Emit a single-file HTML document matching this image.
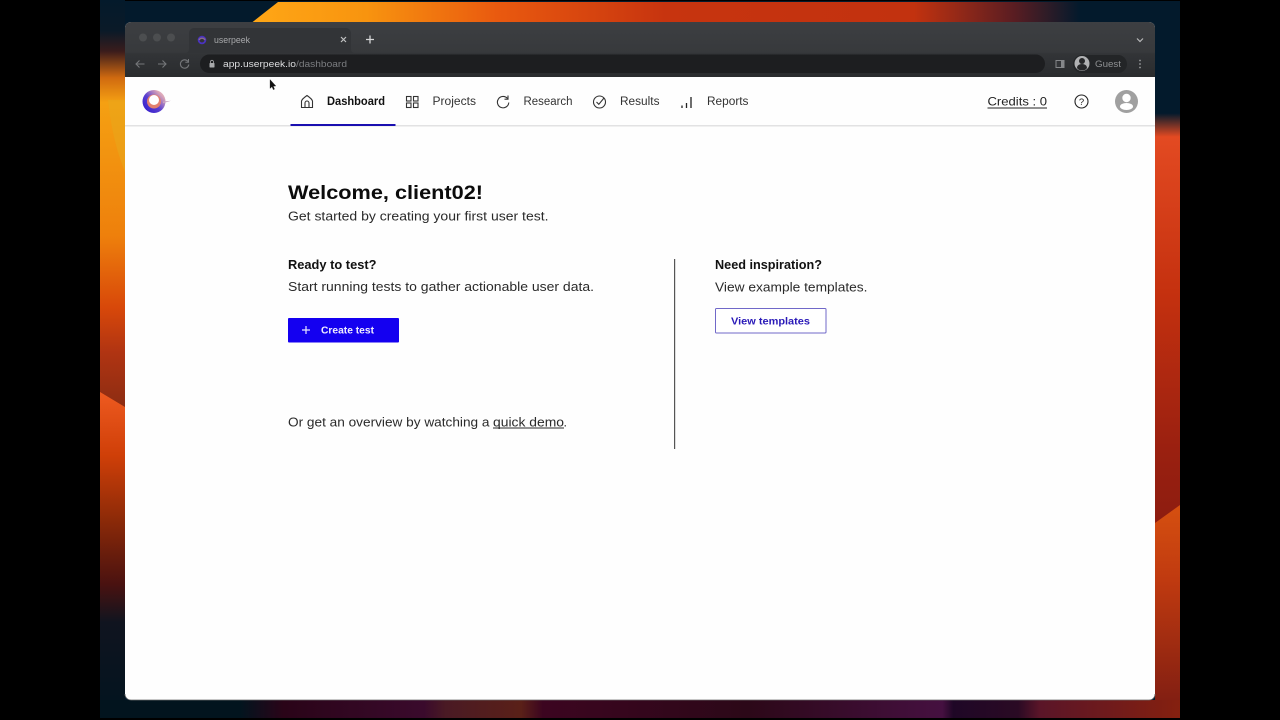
<!DOCTYPE html>
<html><head><meta charset="utf-8"><title>userpeek</title>
<style>html,body{margin:0;padding:0;background:#000;width:1280px;height:720px;overflow:hidden}svg{display:block}text{font-family:"Liberation Sans",sans-serif}</style></head>
<body>
<svg width="1280" height="720" viewBox="0 0 1280 720" xmlns="http://www.w3.org/2000/svg">
<defs>
<linearGradient id="top" x1="0" x2="1" y1="0" y2="0">
<stop offset="0" stop-color="#ffa716"/><stop offset=".14" stop-color="#f8940f"/><stop offset=".3" stop-color="#e9590f"/><stop offset=".5" stop-color="#c7340f"/><stop offset=".8" stop-color="#c2320f"/><stop offset=".92" stop-color="#5a1d22"/><stop offset="1" stop-color="#031a2c"/></linearGradient>
<linearGradient id="chrome" x1="0" x2="0" y1="0" y2="1"><stop offset="0" stop-color="#3d3f42"/><stop offset=".55" stop-color="#37393c"/><stop offset=".58" stop-color="#323437"/><stop offset="1" stop-color="#2a2c2e"/></linearGradient>
<linearGradient id="left" x1="0" x2="0" y1="0" y2="1">
<stop offset="0" stop-color="#041a2b"/><stop offset=".075" stop-color="#0a1a28"/><stop offset=".125" stop-color="#3a1c1c"/><stop offset=".19" stop-color="#d06a10"/><stop offset=".25" stop-color="#f5a012"/><stop offset=".575" stop-color="#ee800c"/><stop offset=".75" stop-color="#d8480a"/><stop offset=".86" stop-color="#b03412"/><stop offset="1" stop-color="#8a2c12"/></linearGradient>
<linearGradient id="left2" x1="0" x2="0" y1="0" y2="1">
<stop offset="0" stop-color="#ee5a20"/><stop offset=".2" stop-color="#cf3f08"/><stop offset=".4" stop-color="#8c2a08"/><stop offset=".6" stop-color="#4a1210"/><stop offset=".72" stop-color="#10141f"/><stop offset="1" stop-color="#02141f"/></linearGradient>
<linearGradient id="right" x1="0" x2="0" y1="0" y2="1">
<stop offset="0" stop-color="#031a2c"/><stop offset=".21" stop-color="#031a2c"/><stop offset=".255" stop-color="#e34a22"/><stop offset=".55" stop-color="#c5310f"/><stop offset=".85" stop-color="#9a2010"/><stop offset="1" stop-color="#8c1c10"/></linearGradient>
<linearGradient id="right2" x1="0" x2="0" y1="0" y2="1">
<stop offset="0" stop-color="#d65010"/><stop offset=".35" stop-color="#c03a10"/><stop offset="1" stop-color="#7a1b12"/></linearGradient>
<linearGradient id="bot" x1="0" x2="1" y1="0" y2="0">
<stop offset="0" stop-color="#02141e"/><stop offset=".13" stop-color="#02141e"/><stop offset=".17" stop-color="#2a0418"/><stop offset=".3" stop-color="#3a0a2c"/><stop offset=".32" stop-color="#4a1a24"/><stop offset=".39" stop-color="#5a2018"/><stop offset=".41" stop-color="#3c0520"/><stop offset=".6" stop-color="#2c0818"/><stop offset=".78" stop-color="#451040"/><stop offset=".79" stop-color="#1f0726"/><stop offset=".85" stop-color="#2a0a24"/><stop offset=".87" stop-color="#5a1528"/><stop offset="1" stop-color="#85200f"/></linearGradient>
<linearGradient id="logo2" x1="0" x2="1" y1="1" y2="0"><stop offset="0" stop-color="#2a14cc"/><stop offset=".45" stop-color="#5a3fd0"/><stop offset=".8" stop-color="#dba6b8"/><stop offset="1" stop-color="#eec6cc"/></linearGradient>
</defs>
<rect width="1280" height="720" fill="#000"/>
<rect x="100" y="1" width="1080" height="717" fill="#031a2c"/>
<polygon points="278,2 1080,2 1080,24 250,24" fill="url(#top)"/>
<rect x="100" y="0" width="25" height="410" fill="url(#left)"/>
<path d="M108 100q4 40 17 72V100Z" fill="#e8a81c" opacity=".55"/>
<polygon points="100,392 125,407 125,712 100,712" fill="url(#left2)"/>
<rect x="1155" y="3" width="25" height="525" fill="url(#right)"/>
<polygon points="1155,523 1180,505 1180,718 1155,718" fill="url(#right2)"/>
<rect x="100" y="700" width="1080" height="18" fill="url(#bot)"/>

<!-- Window -->
<rect x="125" y="22" width="1030" height="678" rx="6" fill="#fefefe"/>
<path d="M131 700h1018a6 6 0 0 0 6-6" fill="none" stroke="#6a6a6a" stroke-width=".8"/>
<path d="M125 694a6 6 0 0 0 6 6" fill="none" stroke="#6a6a6a" stroke-width=".8"/>
<path d="M125 77V28a6 6 0 0 1 6-6H1149a6 6 0 0 1 6 6V77Z" fill="url(#chrome)"/>
<!-- traffic lights -->
<circle cx="143" cy="37.500" r="4" fill="#4c4e50"/><circle cx="157" cy="37.500" r="4" fill="#4c4e50"/><circle cx="171" cy="37.500" r="4" fill="#4c4e50"/>
<!-- tab -->
<path d="M186 53a4 4 0 0 0 3-4V33a5 5 0 0 1 5-5H346a5 5 0 0 1 5 5V49a4 4 0 0 0 3 4Z" fill="#323437"/>
<circle cx="202" cy="40" r="3.400" fill="none" stroke="#4a32c0" stroke-width="1.800"/>
<path d="M199 40a3.400 3.400 0 0 1 6 0" fill="none" stroke="#8a6a90" stroke-width="1.400"/>
<text x="214" y="43" font-size="9" fill="#a8a9ab" textLength="36" lengthAdjust="spacingAndGlyphs">userpeek</text>
<path d="M341 37l5 5M346 37l-5 5" stroke="#c0c1c2" stroke-width="1.200"/>
<path d="M370 35.500v8M366 39.500h8" stroke="#d5d6d7" stroke-width="1.300"/>
<path d="M1137 38.500l3 3 3-3" fill="none" stroke="#b8b9ba" stroke-width="1.200"/>
<!-- toolbar -->
<path d="M144.500 64h-8M139.500 60.500l-3.500 3.500 3.500 3.500" fill="none" stroke="#75777a" stroke-width="1.100"/>
<path d="M158 64h8M162.500 60.500l3.500 3.500-3.500 3.500" fill="none" stroke="#75777a" stroke-width="1.100"/>
<path d="M188 61.500a4.200 4.200 0 1 0 .8 3" fill="none" stroke="#75777a" stroke-width="1.100"/><path d="M188.500 59v3.200h-3.200" fill="none" stroke="#75777a" stroke-width="1"/>
<rect x="200" y="54.500" width="845" height="18.500" rx="9.250" fill="#1d1e20"/>
<rect x="209.500" y="63" width="5" height="4.500" rx=".6" fill="#a8a9ab"/><path d="M210.500 63v-1.200a1.500 1.500 0 0 1 3 0V63" fill="none" stroke="#a8a9ab" stroke-width=".8"/>
<text x="223" y="67" font-size="9.500" fill="#dcdddf" textLength="73" lengthAdjust="spacingAndGlyphs">app.userpeek.io</text>
<text x="296" y="67" font-size="9.500" fill="#7b7d80" textLength="51" lengthAdjust="spacingAndGlyphs">/dashboard</text>
<rect x="1055.500" y="60" width="9" height="8" fill="#85878a"/><rect x="1056.500" y="61" width="4.500" height="6" fill="#333538"/>
<rect x="1073" y="55" width="54" height="18" rx="9" fill="#232527"/>
<circle cx="1082" cy="63.500" r="7.500" fill="#b0b1b3"/><circle cx="1082" cy="61" r="3" fill="#262729"/><path d="M1077 67.500a5 3.500 0 0 1 10 0a5 3 0 0 1-10 0Z" fill="#262729"/>
<text x="1095" y="67" font-size="9.500" fill="#8e9092" textLength="26" lengthAdjust="spacingAndGlyphs">Guest</text>
<circle cx="1140" cy="60.500" r=".9" fill="#989a9c"/><circle cx="1140" cy="64" r=".9" fill="#989a9c"/><circle cx="1140" cy="67.500" r=".9" fill="#989a9c"/>

<!-- Nav -->
<rect x="125" y="125" width="1030" height="1.500" fill="#e2e2e3"/>
<rect x="290.500" y="124" width="105" height="2" fill="#1a0fb0"/>
<!-- logo -->
<circle cx="154" cy="101.500" r="11.500" fill="url(#logo2)"/>
<circle cx="154" cy="101.500" r="7" fill="#e2806e"/>
<circle cx="154" cy="100" r="5" fill="#fff"/>
<path d="M163 101.500l8-.8-8 2.500Z" fill="#c9a6c0"/>
<!-- cursor -->
<path d="M270 79.500v9l2-1.800 1.300 3 1.300-.6-1.300-2.900 2.600-.2Z" fill="#111" stroke="#333" stroke-width=".3"/>
<!-- nav icons -->
<g fill="none" stroke="#333" stroke-width="1.100">
<path d="M301.500 107.500V101Q302 99 307 95.500Q312 99 312.500 101V107.500Z"/><path d="M305 107.500v-4.500a2 2 0 0 1 4 0v4.500"/>
<rect x="406.500" y="96.500" width="4.500" height="4.500"/><rect x="413.500" y="96.500" width="4.500" height="4.500"/><rect x="406.500" y="103" width="4.500" height="4.500"/><rect x="413.500" y="103" width="4.500" height="4.500"/>
<path d="M507.500 98.500a5.700 5.700 0 1 0 1.300 4"/><path d="M508 95.500v3.700h-3.500"/>
<circle cx="599.500" cy="102" r="6"/><path d="M596.500 102l2.300 2.300 5.200-6.300"/>
</g>
<path d="M682 108v-2.500M686.500 108v-5M691 108v-11" fill="none" stroke="#222" stroke-width="1.300"/>
<text x="327" y="105" font-size="11.500" font-weight="700" fill="#111" textLength="58" lengthAdjust="spacingAndGlyphs">Dashboard</text>
<text x="432.500" y="105" font-size="11.500" fill="#333" textLength="43.500" lengthAdjust="spacingAndGlyphs">Projects</text>
<text x="523.500" y="105" font-size="11.500" fill="#333" textLength="49" lengthAdjust="spacingAndGlyphs">Research</text>
<text x="620" y="105" font-size="11.500" fill="#333" textLength="39.500" lengthAdjust="spacingAndGlyphs">Results</text>
<text x="707" y="105" font-size="11.500" fill="#333" textLength="41.500" lengthAdjust="spacingAndGlyphs">Reports</text>
<text x="987.500" y="105.500" font-size="12" fill="#222" textLength="59.500" lengthAdjust="spacingAndGlyphs">Credits : 0</text>
<rect x="987.500" y="107.500" width="59.500" height="1" fill="#222"/>
<circle cx="1081.500" cy="101.500" r="6.500" fill="none" stroke="#222" stroke-width="1.100"/>
<text x="1081.500" y="105" font-size="9.500" fill="#222" text-anchor="middle">?</text>
<circle cx="1126.500" cy="101.500" r="11.500" fill="#a0a0a0"/>
<circle cx="1126.500" cy="98" r="4.200" fill="#fff"/><ellipse cx="1126.500" cy="106.500" rx="6.500" ry="3.500" fill="#fff"/>

<!-- Content -->
<text x="288" y="199" font-size="19" font-weight="700" fill="#0b0b0b" textLength="195" lengthAdjust="spacingAndGlyphs">Welcome, client02!</text>
<text x="288" y="220.500" font-size="12.500" fill="#2a2a2a" textLength="260.500" lengthAdjust="spacingAndGlyphs">Get started by creating your first user test.</text>
<text x="288" y="269" font-size="12.500" font-weight="700" fill="#111" textLength="88.500" lengthAdjust="spacingAndGlyphs">Ready to test?</text>
<text x="288" y="291" font-size="12.500" fill="#2a2a2a" textLength="306" lengthAdjust="spacingAndGlyphs">Start running tests to gather actionable user data.</text>
<rect x="288" y="318" width="111" height="24.500" rx="1" fill="#1400f0"/>
<path d="M306 326v8M302 330h8" stroke="#e8e6ff" stroke-width="1.200"/>
<text x="321" y="333.500" font-size="10.300" font-weight="700" fill="#f0eeff" textLength="53" lengthAdjust="spacingAndGlyphs">Create test</text>
<text x="288" y="426.500" font-size="12.500" fill="#2a2a2a" textLength="201.500" lengthAdjust="spacingAndGlyphs">Or get an overview by watching a</text>
<text x="493" y="426.500" font-size="12.500" fill="#2a2a2a" textLength="71" lengthAdjust="spacingAndGlyphs">quick demo</text>
<rect x="493" y="427.500" width="71" height="1" fill="#2a2a2a"/>
<text x="563.500" y="426.500" font-size="12.500" fill="#2a2a2a">.</text>
<rect x="674" y="259" width="1.200" height="190" fill="#555"/>
<text x="715" y="269" font-size="12.500" font-weight="700" fill="#111" textLength="107" lengthAdjust="spacingAndGlyphs">Need inspiration?</text>
<text x="715" y="291.500" font-size="12.500" fill="#2a2a2a" textLength="152.500" lengthAdjust="spacingAndGlyphs">View example templates.</text>
<rect x="715.500" y="308.500" width="110.500" height="24.500" rx="1" fill="#fff" stroke="#7068c8" stroke-width="1"/>
<text x="731" y="324.500" font-size="10.300" font-weight="700" fill="#2a1ab8" textLength="79" lengthAdjust="spacingAndGlyphs">View templates</text>
</svg>
</body></html>
